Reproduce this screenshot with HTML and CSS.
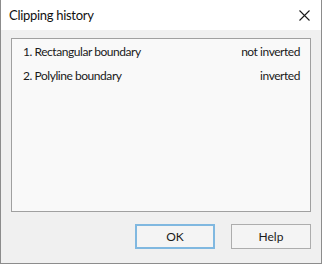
FILE: index.html
```html
<!DOCTYPE html>
<html lang="en">
<head>
  <meta charset="UTF-8">
  <title>Clipping history</title>
  <link rel="stylesheet" href="styles.css">
</head>
<body>
  <div class="dialog">
    <div class="titlebar">
      <span class="title">Clipping history</span>
      <button class="close-btn" aria-label="Close">
        <svg width="11" height="11" viewBox="0 0 11 11">
          <path d="M0.5 0.5 L10.5 10.5 M10.5 0.5 L0.5 10.5" stroke="#1a1a1a" stroke-width="1.1" fill="none"/>
        </svg>
      </button>
    </div>

    <div class="content">
      <div class="history-list">
        <div class="history-row">
          <span>1. Rectangular boundary</span>
          <span>not inverted</span>
        </div>
        <div class="history-row">
          <span>2. Polyline boundary</span>
          <span>inverted</span>
        </div>
      </div>

      <div class="buttons">
        <button class="btn btn-default">OK</button>
        <button class="btn">Help</button>
      </div>
    </div>
  </div>
</body>
</html>
```

FILE: styles.css
```css
html, body {
  margin: 0;
  padding: 0;
}
body {
  width: 322px;
  height: 264px;
  font-family: Lato, "Noto Sans", sans-serif;
  font-size: 12px;
  color: #1a1a1a;
  background: #f0f0f0;
}
.dialog {
  box-sizing: border-box;
  width: 322px;
  height: 264px;
  border: 1px solid #8c8c8c;
  border-top: none;
  background: #f0f0f0;
  display: flex;
  flex-direction: column;
}
.titlebar {
  height: 30px;
  background: white;
  display: flex;
  align-items: center;
  justify-content: space-between;
  padding-left: 8px;
}
.title {
  font-size: 13px;
  letter-spacing: -0.3px;
  color: #111;
}
.close-btn {
  background: none;
  border: none;
  width: 34px;
  height: 30px;
  padding: 0;
  display: flex;
  align-items: center;
  justify-content: center;
}
.content {
  padding: 8px 10px 0 10px;
}
.history-list {
  box-sizing: border-box;
  height: 174px;
  border: 1px solid #a0a0a0;
  background: #f9f9f9;
  padding: 4px 10px 0 11px;
}
.history-row {
  display: flex;
  justify-content: space-between;
  height: 24px;
  line-height: 18px;
  letter-spacing: -0.45px;
}
.buttons {
  display: flex;
  justify-content: flex-end;
  gap: 16px;
  margin-top: 12px;
}
.btn {
  box-sizing: border-box;
  width: 80px;
  height: 25px;
  font-family: inherit;
  font-size: 12px;
  color: #1a1a1a;
  background: #f4f4f4;
  border: 1px solid #adadad;
  padding: 0;
}
.btn-default {
  border: 2px solid #80b8e0;
}
```
